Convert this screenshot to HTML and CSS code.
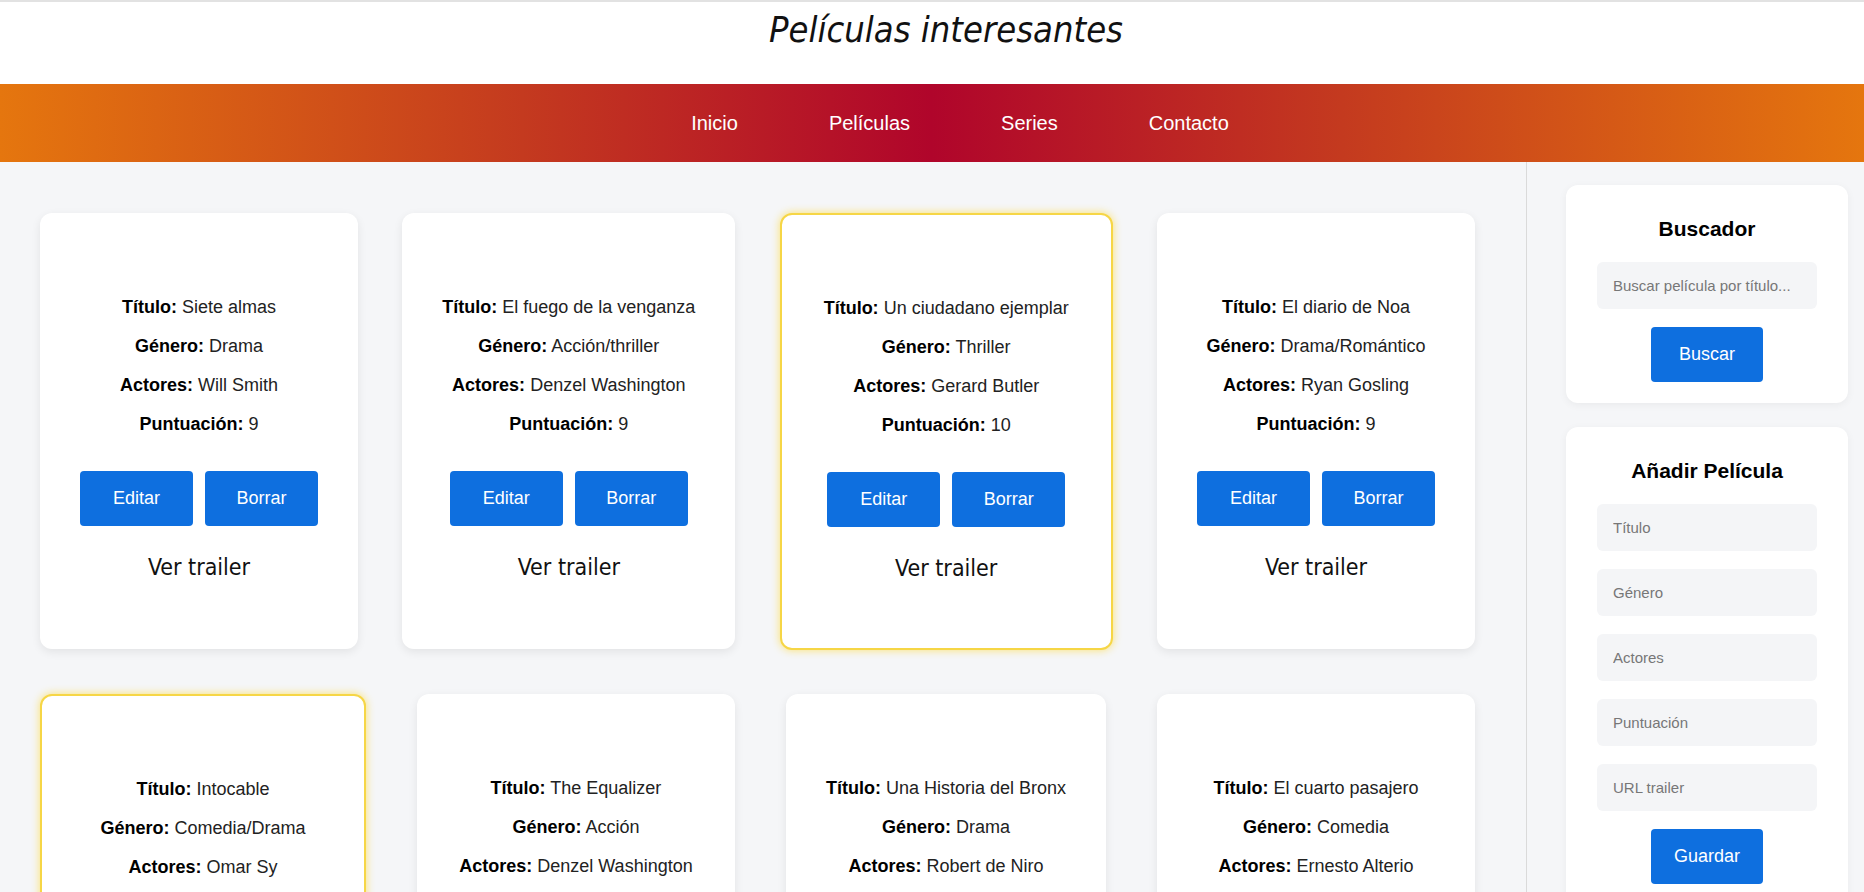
FILE: index.html
```html
<!DOCTYPE html>
<html lang="es">
<head>
<meta charset="utf-8">
<title>Películas interesantes</title>
<link rel="stylesheet" href="styles.css">
</head>
<body>
<header class="site-header">
  <h1 class="site-title">Películas interesantes</h1>
</header>
<nav class="main-nav">
  <ul class="nav-list">
    <li><a href="#" class="nav-link">Inicio</a></li>
    <li><a href="#" class="nav-link">Películas</a></li>
    <li><a href="#" class="nav-link">Series</a></li>
    <li><a href="#" class="nav-link">Contacto</a></li>
  </ul>
</nav>
<div class="layout">
  <main class="movies">
    <article class="movie-card">
      <p class="info"><b>Título:</b> Siete almas</p>
      <p class="info"><b>Género:</b> Drama</p>
      <p class="info"><b>Actores:</b> Will Smith</p>
      <p class="info"><b>Puntuación:</b> 9</p>
      <div class="actions"><button class="btn">Editar</button><button class="btn">Borrar</button></div>
      <a href="#" class="trailer">Ver trailer</a>
    </article>
    <article class="movie-card">
      <p class="info"><b>Título:</b> El fuego de la venganza</p>
      <p class="info"><b>Género:</b> Acción/thriller</p>
      <p class="info"><b>Actores:</b> Denzel Washington</p>
      <p class="info"><b>Puntuación:</b> 9</p>
      <div class="actions"><button class="btn">Editar</button><button class="btn">Borrar</button></div>
      <a href="#" class="trailer">Ver trailer</a>
    </article>
    <article class="movie-card featured">
      <p class="info"><b>Título:</b> Un ciudadano ejemplar</p>
      <p class="info"><b>Género:</b> Thriller</p>
      <p class="info"><b>Actores:</b> Gerard Butler</p>
      <p class="info"><b>Puntuación:</b> 10</p>
      <div class="actions"><button class="btn">Editar</button><button class="btn">Borrar</button></div>
      <a href="#" class="trailer">Ver trailer</a>
    </article>
    <article class="movie-card">
      <p class="info"><b>Título:</b> El diario de Noa</p>
      <p class="info"><b>Género:</b> Drama/Romántico</p>
      <p class="info"><b>Actores:</b> Ryan Gosling</p>
      <p class="info"><b>Puntuación:</b> 9</p>
      <div class="actions"><button class="btn">Editar</button><button class="btn">Borrar</button></div>
      <a href="#" class="trailer">Ver trailer</a>
    </article>
    <article class="movie-card featured">
      <p class="info"><b>Título:</b> Intocable</p>
      <p class="info"><b>Género:</b> Comedia/Drama</p>
      <p class="info"><b>Actores:</b> Omar Sy</p>
      <p class="info"><b>Puntuación:</b> 10</p>
      <div class="actions"><button class="btn">Editar</button><button class="btn">Borrar</button></div>
      <a href="#" class="trailer">Ver trailer</a>
    </article>
    <article class="movie-card">
      <p class="info"><b>Título:</b> The Equalizer</p>
      <p class="info"><b>Género:</b> Acción</p>
      <p class="info"><b>Actores:</b> Denzel Washington</p>
      <p class="info"><b>Puntuación:</b> 8</p>
      <div class="actions"><button class="btn">Editar</button><button class="btn">Borrar</button></div>
      <a href="#" class="trailer">Ver trailer</a>
    </article>
    <article class="movie-card">
      <p class="info"><b>Título:</b> Una Historia del Bronx</p>
      <p class="info"><b>Género:</b> Drama</p>
      <p class="info"><b>Actores:</b> Robert de Niro</p>
      <p class="info"><b>Puntuación:</b> 9</p>
      <div class="actions"><button class="btn">Editar</button><button class="btn">Borrar</button></div>
      <a href="#" class="trailer">Ver trailer</a>
    </article>
    <article class="movie-card">
      <p class="info"><b>Título:</b> El cuarto pasajero</p>
      <p class="info"><b>Género:</b> Comedia</p>
      <p class="info"><b>Actores:</b> Ernesto Alterio</p>
      <p class="info"><b>Puntuación:</b> 7</p>
      <div class="actions"><button class="btn">Editar</button><button class="btn">Borrar</button></div>
      <a href="#" class="trailer">Ver trailer</a>
    </article>
  </main>
  <aside class="sidebar">
    <section class="panel">
      <h3 class="panel-title">Buscador</h3>
      <input class="field" type="text" placeholder="Buscar película por título...">
      <button class="btn panel-btn">Buscar</button>
    </section>
    <section class="panel">
      <h3 class="panel-title">Añadir Película</h3>
      <input class="field" type="text" placeholder="Título">
      <input class="field" type="text" placeholder="Género">
      <input class="field" type="text" placeholder="Actores">
      <input class="field" type="text" placeholder="Puntuación">
      <input class="field" type="text" placeholder="URL trailer">
      <button class="btn panel-btn">Guardar</button>
    </section>
  </aside>
</div>
</body>
</html>
```
FILE: styles.css
```css
* { box-sizing: border-box; }
html, body { margin: 0; padding: 0; }
body {
  font-family: "Liberation Sans", Arial, sans-serif;
  background: #f5f6f8;
  color: #1c1c1c;
  overflow: hidden;
}
.site-header {
  background: #ffffff;
  border-top: 2px solid #e2e2e2;
  height: 84px;
  display: flex;
  justify-content: center;
  padding-left: 28px;
}
.site-title {
  margin: 7px 0 0;
  font-family: "DejaVu Sans Condensed", "DejaVu Sans", sans-serif;
  font-stretch: condensed;
  font-style: italic;
  font-weight: normal;
  font-size: 36px;
  line-height: 42px;
  color: #111;
}
.main-nav {
  height: 78px;
  background: linear-gradient(90deg, #e5760e 0%, #c43a1f 28%, #b0052b 50%, #c43a1f 72%, #e5760e 100%);
  display: flex;
  align-items: center;
  justify-content: center;
  padding-left: 56px;
}
.nav-list {
  list-style: none;
  margin: 0;
  padding: 0;
  display: flex;
  gap: 91px;
}
.nav-link {
  color: #ffffff;
  text-decoration: none;
  font-size: 20px;
}
.layout {
  display: flex;
  align-items: flex-start;
}
.movies {
  flex: 1;
  display: flex;
  flex-wrap: wrap;
  justify-content: space-between;
  align-items: flex-start;
  row-gap: 44px;
  padding: 51px 51px 40px 40px;
}
.movie-card {
  background: #ffffff;
  border-radius: 12px;
  box-shadow: 0 3px 10px rgba(0, 0, 0, 0.08);
  min-width: 318px;
  padding: 84px 40px 69px;
  display: flex;
  flex-direction: column;
  align-items: center;
  text-align: center;
}
.movie-card.featured {
  border: 2px solid #f6d646;
  box-shadow: 0 0 8px rgba(255, 214, 30, 0.65);
  padding: 83px 42px 67px;
}
.info {
  margin: 0 0 18px;
  font-size: 18px;
  line-height: 21px;
  white-space: nowrap;
  color: #222;
}
.info b { color: #000; }
.actions {
  display: flex;
  gap: 12px;
  margin-top: 18px;
}
.btn {
  background: #0e6fdf;
  color: #ffffff;
  border: none;
  border-radius: 4px;
  font-family: "Liberation Sans", Arial, sans-serif;
  font-size: 18px;
  height: 55px;
  width: 113px;
  padding: 0;
  cursor: pointer;
}
.trailer {
  margin-top: 28px;
  font-family: "DejaVu Sans Condensed", "DejaVu Sans", sans-serif;
  font-stretch: condensed;
  font-size: 23px;
  line-height: 26px;
  color: #111;
  text-decoration: none;
}
.sidebar {
  width: 338px;
  flex: none;
  align-self: stretch;
  border-left: 1px solid #dadada;
  padding: 23px 16px 0 39px;
  min-height: 760px;
}
.panel {
  background: #ffffff;
  border-radius: 12px;
  box-shadow: 0 2px 8px rgba(0, 0, 0, 0.05);
  padding: 32px 31px 21px;
  display: flex;
  flex-direction: column;
  align-items: center;
  gap: 18px;
  margin-bottom: 24px;
}
.panel-title {
  margin: 0 0 3px;
  font-size: 21px;
  line-height: 24px;
  font-weight: bold;
  color: #000;
}
.field {
  width: 220px;
  height: 47px;
  border: none;
  border-radius: 6px;
  background: #f4f5f7;
  padding: 0 16px;
  font-family: "Liberation Sans", Arial, sans-serif;
  font-size: 15px;
  color: #333;
}
.field::placeholder { color: #777; }
.panel-btn {
  width: 112px;
}
```
